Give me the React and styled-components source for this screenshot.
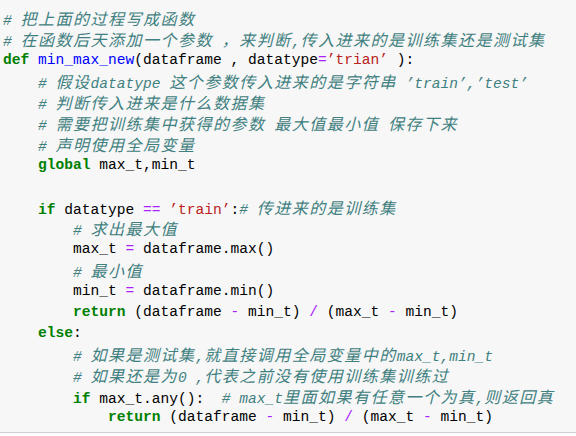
import React from 'react';
import styled, { createGlobalStyle } from 'styled-components';

const Global = createGlobalStyle`
  html, body { margin: 0; padding: 0; background: #ffffff; }
  body { width: 576px; height: 436px; overflow: hidden; }
`;

const Block = styled.pre`
  margin: 0;
  box-sizing: border-box;
  width: 576px;
  height: 433px;
  padding: 8px 0 0 3px;
  background: #f7f7f7;
  border-bottom: 1px solid #cfcfcf;
  font-family: "Liberation Mono", monospace;
  font-size: 14.58px;
  color: #000;
  overflow: hidden;
`;

const Line = styled.div`
  height: 21px;
  line-height: 21px;
  white-space: pre;
`;

const palette = {
  kw: '#008000',
  def: '#0000ff',
  str: '#ba2121',
  op: '#aa22ff',
  cm: '#408080',
  tx: '#000000',
};

const Tok = styled.span`
  color: ${(p) => palette[p.$k]};
  font-weight: ${(p) => (p.$k === 'kw' ? 700 : 400)};
  font-style: ${(p) => (p.$k === 'cm' ? 'italic' : 'normal')};
`;

const Han = styled.span`
  font-family: "Noto Sans CJK SC", sans-serif;
  font-size: 16px;
  line-height: 21px;
  letter-spacing: 1.5px;
`;

const HAN = /([\u2e80-\u9fff\uff00-\uffef\u3000-\u303f]+)/;

function Chunk({ text }) {
  return text.split(HAN).map((s, i) => (i % 2 ? <Han key={i}>{s}</Han> : s));
}

const RET = [
  ['kw', 'return'], ['tx', ' (dataframe '], ['op', '-'], ['tx', ' min_t) '],
  ['op', '/'], ['tx', ' (max_t '], ['op', '-'], ['tx', ' min_t)'],
];

const LINES = [
  [['cm', '# 把上面的过程写成函数']],
  [['cm', '# 在函数后天添加一个参数 ，来判断,传入进来的是训练集还是测试集']],
  [['kw', 'def'], ['tx', ' '], ['def', 'min_max_new'], ['tx', '(dataframe , datatype'], ['op', '='], ['str', '’trian’'], ['tx', ' ):']],
  [['tx', '    '], ['cm', '# 假设datatype 这个参数传入进来的是字符串 ’train’,’test’']],
  [['tx', '    '], ['cm', '# 判断传入进来是什么数据集']],
  [['tx', '    '], ['cm', '# 需要把训练集中获得的参数 最大值最小值 保存下来']],
  [['tx', '    '], ['cm', '# 声明使用全局变量']],
  [['tx', '    '], ['kw', 'global'], ['tx', ' max_t,min_t']],
  [],
  [['tx', '    '], ['kw', 'if'], ['tx', ' datatype '], ['op', '=='], ['tx', ' '], ['str', '’train’'], ['tx', ':'], ['cm', '# 传进来的是训练集']],
  [['tx', '        '], ['cm', '# 求出最大值']],
  [['tx', '        max_t '], ['op', '='], ['tx', ' dataframe.max()']],
  [['tx', '        '], ['cm', '# 最小值']],
  [['tx', '        min_t '], ['op', '='], ['tx', ' dataframe.min()']],
  [['tx', '        '], ...RET],
  [['tx', '    '], ['kw', 'else'], ['tx', ':']],
  [['tx', '        '], ['cm', '# 如果是测试集,就直接调用全局变量中的max_t,min_t']],
  [['tx', '        '], ['cm', '# 如果还是为0 ,代表之前没有使用训练集训练过']],
  [['tx', '        '], ['kw', 'if'], ['tx', ' max_t.any():  '], ['cm', '# max_t里面如果有任意一个为真,则返回真']],
  [['tx', '            '], ...RET],
];

export default function App() {
  return (
    <>
      <Global />
      <Block>
        {LINES.map((toks, i) => (
          <Line key={i}>
            {toks.length === 0 ? ' ' : toks.map(([k, t], j) => (
              <Tok key={j} $k={k}>
                <Chunk text={t} />
              </Tok>
            ))}
          </Line>
        ))}
      </Block>
    </>
  );
}
